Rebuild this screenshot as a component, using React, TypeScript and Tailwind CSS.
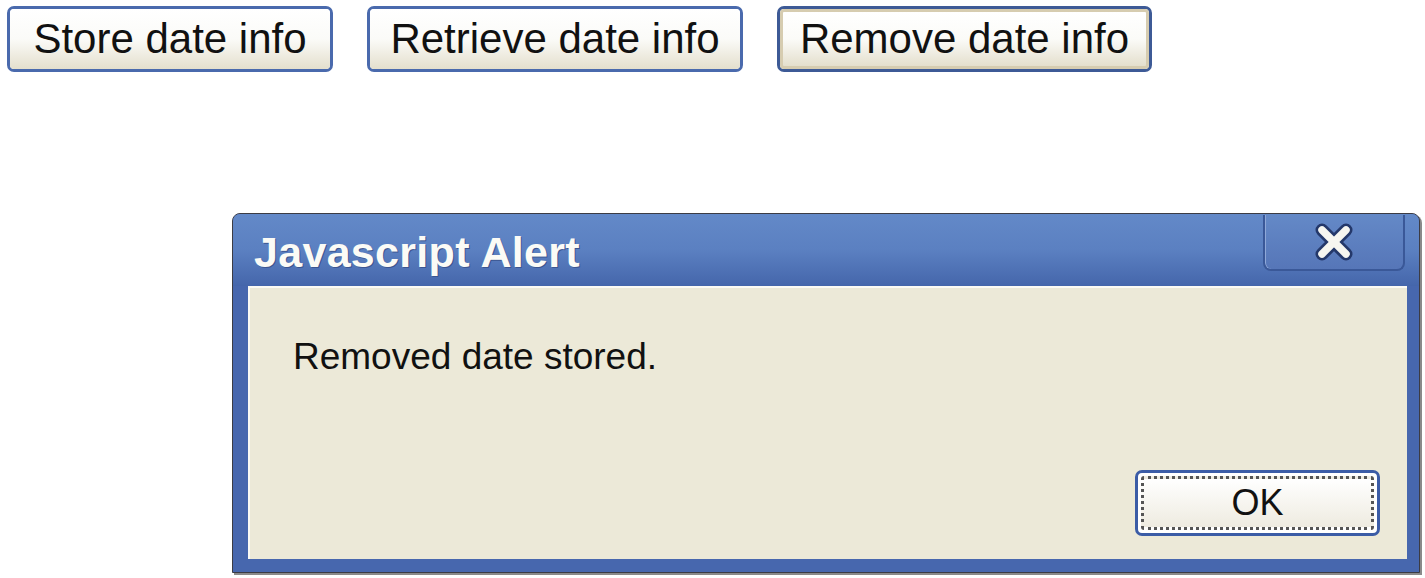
import React from "react";

const font = { fontFamily: '"Liberation Sans", Arial, sans-serif' };

function XpButton({ label, focused = false, className = "" }: { label: string; focused?: boolean; className?: string }) {
  return (
    <button
      className={`h-[66px] rounded-[7px] border-[3px] ${
        focused ? "border-[#3d5a96]" : "border-[#4a6aad]"
      } bg-white p-0 ${className}`}
    >
      <div
        className={`flex h-full w-full items-center justify-center rounded-[4px] ${
          focused ? "border-[3px] border-[#d6ccb0]" : ""
        } bg-gradient-to-b from-white via-[#fbfbf8] to-[#e4dfcd] text-[42px] leading-none text-[#111]`}
      >
        <span className="-mt-[1px]">{label}</span>
      </div>
    </button>
  );
}

function CloseIcon() {
  return (
    <svg width="44" height="38" viewBox="0 0 44 38">
      <path d="M10 7 L34 31 M34 7 L10 31" stroke="#24386a" strokeWidth="13" strokeLinecap="round" />
      <path d="M10 7 L34 31 M34 7 L10 31" stroke="#f6f6f0" strokeWidth="7.5" strokeLinecap="round" />
    </svg>
  );
}

export default function App() {
  return (
    <div className="h-[578px] w-[1425px] overflow-hidden bg-white" style={font}>
      {/* Buttons row */}
      <div className="flex gap-[34px] pl-[7px] pt-[6px]">
        <XpButton label="Store date info" className="w-[326px]" />
        <XpButton label="Retrieve date info" className="w-[376px]" />
        <XpButton label="Remove date info" focused className="w-[375px]" />
      </div>

      {/* Alert dialog */}
      <div className="ml-[232px] mt-[141px] flex h-[360px] w-[1188px] flex-col rounded-t-[8px] border border-[#3c3c44] bg-[#4767ae] shadow-[2px_2px_0_#8a8a8a]">
        {/* Title bar */}
        <div className="flex h-[72px] items-start justify-between rounded-t-[7px] bg-gradient-to-b from-[#6389c8] via-[#5b80c1] to-[#4566ab] pl-[21px] pr-[14px]">
          <div
            className="mt-[17px] text-[43px] font-bold leading-none tracking-[0.3px] text-[#fbfbf6] [text-shadow:1px_1px_0_#3b5590]"
            style={font}
          >
            Javascript Alert
          </div>
          <div className="mt-[1px] flex h-[56px] w-[142px] items-center justify-center rounded-b-[8px] border-2 border-t-0 border-[#3a5898] bg-gradient-to-b from-[#6489c7] to-[#5676b8] shadow-[inset_1px_0_0_#8fa8d8]">
            <CloseIcon />
          </div>
        </div>

        {/* Content */}
        <div className="mb-[13px] ml-[15px] mr-[12px] flex flex-1 flex-col justify-between border-l-2 border-t-2 border-[#fbfaf4] bg-[#ece9d8] pb-[23px] pr-[27px]">
          <div className="pl-[43px] pt-[50px] text-[37px] leading-none text-[#111]">Removed date stored.</div>
          <div className="flex justify-end">
            <button className="h-[66px] w-[245px] rounded-[7px] border-[3px] border-[#3b5ca6] bg-white p-[3px]">
              <div className="flex h-full w-full items-center justify-center rounded-[3px] border-[3px] border-dotted border-[#555] bg-gradient-to-b from-white to-[#eeebe0] text-[36px] leading-none text-[#111]">
                <span className="-mt-[1px]">OK</span>
              </div>
            </button>
          </div>
        </div>
      </div>
    </div>
  );
}
